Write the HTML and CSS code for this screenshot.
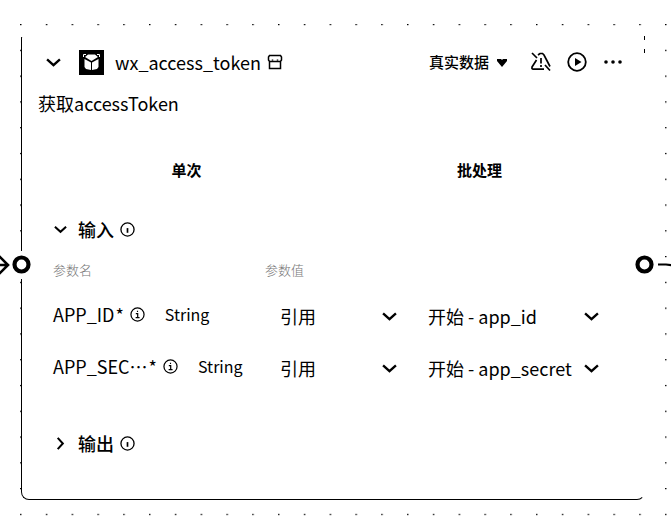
FILE: index.html
```html
<!DOCTYPE html>
<html lang="zh-CN">
<head>
<meta charset="utf-8">
<title>wx_access_token</title>
<link rel="stylesheet" href="styles.css">
</head>
<body>
<svg class="symbols" aria-hidden="true">
  <symbol id="chevron" viewBox="0 0 14 8"><path d="M1 1l6 5.500L13 1" fill="none" stroke="#000" stroke-width="2.200"/></symbol>
  <symbol id="info" viewBox="0 0 16 16"><circle cx="8" cy="8" r="7" fill="none" stroke="#000" stroke-width="1.400"/><path d="M8 6.500v5" stroke="#000" stroke-width="1.800"/></symbol>
  <symbol id="info-serif" viewBox="0 0 16 16"><circle cx="8" cy="8" r="7" fill="none" stroke="#000" stroke-width="1.300"/><path d="M6.200 7h2v4M6 11.400h4.200M7.400 4.600h1.200" fill="none" stroke="#000" stroke-width="1.300"/></symbol>
</svg>
<main class="canvas">
  <svg class="dots" aria-hidden="true">
    <defs><pattern id="grid" x="20" y="24" width="25.800" height="25.780" patternUnits="userSpaceOnUse"><rect width="1.500" height="1.200" fill="#000"/></pattern></defs>
    <rect x="20" y="24" width="100%" height="100%" fill="url(#grid)"/>
  </svg>
  <section class="card">
    <svg class="port port-in" viewBox="0 0 60 28" aria-hidden="true">
      <rect x="28" y="0" width="4" height="28" fill="#fff"/>
      <path d="M0 14h16M8 5l9 9-9 9" fill="none" stroke="#000" stroke-width="2.600"/>
      <circle cx="30.500" cy="13.500" r="7" fill="#fff" stroke="#000" stroke-width="4.200"/>
    </svg>
    <svg class="port port-out" viewBox="0 0 60 28" aria-hidden="true">
      <circle cx="29.500" cy="13.500" r="7" fill="#fff" stroke="#000" stroke-width="4.200"/>
      <path d="M43 13.500h8l8 1" fill="none" stroke="#000" stroke-width="2.200"/>
    </svg>
    <header class="header">
      <button class="icon-button" aria-label="收起"><svg class="chevron"><use href="#chevron"/></svg></button>
      <svg class="logo" viewBox="0 0 25 25" aria-hidden="true">
        <rect width="25" height="25" fill="#000"/>
        <path d="M4.500 7V4.500H7M18 4.500h2.500V7" fill="none" stroke="#fff"/>
        <path d="M6 7l3-2.500h7L19 7l-6.500 4zM5.500 9l6.500 3.500V20L7 19l-1.500-2zM19.500 9L13 12.500V20l5-1 1.500-2z" fill="#fff"/>
      </svg>
      <h1 class="title">wx_access_token</h1>
      <svg class="store" viewBox="0 0 16 16" aria-hidden="true"><path d="M2.500 1.500h11L14.500 3v3l-1 1.500h-11L1.500 6V3zM2.500 8v6.500h11V8M5.500 5.500v1M10.500 5.500v1" fill="none" stroke="#000" stroke-width="1.500"/></svg>
      <div class="actions">
        <button class="mode">真实数据 <svg class="heart" viewBox="0 0 10 9" aria-hidden="true"><path d="M0 1h4l1 1 1-1h4v2L5 9 0 3z"/></svg></button>
        <button class="icon-button" aria-label="关闭提醒"><svg class="action" viewBox="0 0 20 20"><path d="M1 1l5 5M14 13l5 5.500M7 3l2-1.500h2.500L13 3l6 11.500M5.500 8L1 15v1.500l1 .700h11M10 6v5.500M10 13v2" fill="none" stroke="#000" stroke-width="1.700"/></svg></button>
        <button class="icon-button" aria-label="运行"><svg class="action" viewBox="0 0 20 20"><circle cx="10" cy="10" r="8.800" fill="none" stroke="#000" stroke-width="1.800"/><path d="M8 6l6.500 4L8 14z"/></svg></button>
        <button class="icon-button" aria-label="更多"><svg class="action" viewBox="0 0 20 20"><circle cx="3" cy="10" r="1.800"/><circle cx="10" cy="10" r="1.800"/><circle cx="17" cy="10" r="1.800"/></svg></button>
      </div>
    </header>
    <p class="description">获取accessToken</p>
    <div class="tabs"><button class="tab">单次</button><button class="tab">批处理</button></div>
    <section class="inputs">
      <h2 class="heading"><button class="fold"><svg class="chevron small"><use href="#chevron"/></svg>输入</button><svg class="info"><use href="#info"/></svg></h2>
      <div class="labels"><span>参数名</span><span>参数值</span></div>
      <div class="row">
        <div class="name"><label for="id-kind">APP_ID<span class="star">*</span></label><svg class="info"><use href="#info-serif"/></svg><span class="type">String</span></div>
        <div class="field kind"><select id="id-kind"><option>引用</option></select><svg class="chevron"><use href="#chevron"/></svg></div>
        <div class="field"><select aria-label="APP_ID 参数值"><option>开始 - app_id</option></select><svg class="chevron"><use href="#chevron"/></svg></div>
      </div>
      <div class="row">
        <div class="name"><label for="secret-kind">APP_SEC…<span class="star">*</span></label><svg class="info"><use href="#info-serif"/></svg><span class="type">String</span></div>
        <div class="field kind"><select id="secret-kind"><option>引用</option></select><svg class="chevron"><use href="#chevron"/></svg></div>
        <div class="field"><select aria-label="APP_SECRET 参数值"><option>开始 - app_secret</option></select><svg class="chevron"><use href="#chevron"/></svg></div>
      </div>
    </section>
    <section class="outputs">
      <h2 class="heading"><button class="fold"><svg class="chevron small closed"><use href="#chevron"/></svg>输出</button><svg class="info"><use href="#info"/></svg></h2>
    </section>
  </section>
</main>
</body>
</html>
```
FILE: styles.css
```css
* { box-sizing: border-box; }
body {
  margin: 0;
  background: #fff;
  color: #000;
  font: 18px/24px "Noto Sans CJK SC", sans-serif;
}
button, select {
  margin: 0;
  padding: 0;
  border: 0;
  background: none;
  color: inherit;
  font: inherit;
  appearance: none;
}
svg { display: block; flex: none; }
.symbols { position: absolute; width: 0; height: 0; }
.canvas {
  position: relative;
  display: flex;
  min-height: 100vh;
  padding: 30px 26px 26px 21px;
  overflow: hidden;
}
.dots { position: absolute; inset: 0; width: 100%; height: 100%; }
.card {
  position: relative;
  flex: 1;
  min-width: 0;
  padding: 19px 18px 0 16px;
  border: 1px solid #000;
  border-top-color: #fff;
  border-right-color: #fff;
  border-radius: 8px;
  background: #fff;
}
/* The left edge starts below the corner; the right edge shows only short ticks. */
.card::before {
  content: "";
  position: absolute;
  top: -1px;
  left: -1px;
  width: 8px;
  height: 7px;
  background: #fff;
}
.card::after {
  content: "";
  position: absolute;
  top: 5px;
  right: -1px;
  width: 1px;
  height: 9px;
  border: solid #000;
  border-width: 4px 0;
}
.port { position: absolute; top: 50%; width: 60px; height: 28px; margin-top: -14px; }
.port-in { left: -31px; }
.port-out { right: -31px; }
.header { display: flex; align-items: center; height: 24px; padding-left: 8px; }
.icon-button { display: flex; }
.chevron { width: 15px; height: 9px; }
.logo { width: 25px; height: 25px; margin: 0 11px 0 18px; }
.title { margin: 0; font-size: 18px; font-weight: 400; }
.store { width: 16px; height: 16px; margin-left: 6px; }
.actions { display: flex; align-items: center; gap: 16px; margin-left: auto; padding-right: 3px; }
.mode { display: flex; align-items: center; gap: 8px; margin-right: 8px; font-size: 15px; font-weight: 500; }
.heart { width: 10px; height: 9px; }
.action { width: 20px; height: 20px; }
.description { margin: 17px 0 0; font-size: 18px; }
.tabs { display: flex; margin-top: 43px; padding-left: 2px; }
.tab { flex: 1; font-size: 15px; font-weight: 700; }
.inputs { margin-top: 35px; }
.heading { display: flex; align-items: center; gap: 6px; margin: 0; padding-left: 16px; font-size: 18px; font-weight: 500; }
.fold { display: flex; align-items: center; gap: 11px; }
.small { width: 13px; }
.closed { transform: rotate(-90deg); }
.info { width: 15px; height: 15px; }
.labels, .row { display: grid; grid-template-columns: 212px 163px 1fr; padding-left: 15px; }
.labels { margin: 17px 0 20px; color: #777; font-size: 13px; font-weight: 300; }
.row { height: 52px; align-items: start; }
.name { display: flex; align-items: center; gap: 6px; }
.star { padding-left: 1px; }
.type { margin-left: 14px; font-size: 16px; }
.field { display: flex; align-items: center; gap: 11px; width: 171px; }
.field select { flex: 1; min-width: 0; height: 28px; overflow: hidden; text-overflow: clip; white-space: nowrap; }
.kind { width: 132px; padding-left: 15px; }
.outputs { margin-top: 25px; }
```
